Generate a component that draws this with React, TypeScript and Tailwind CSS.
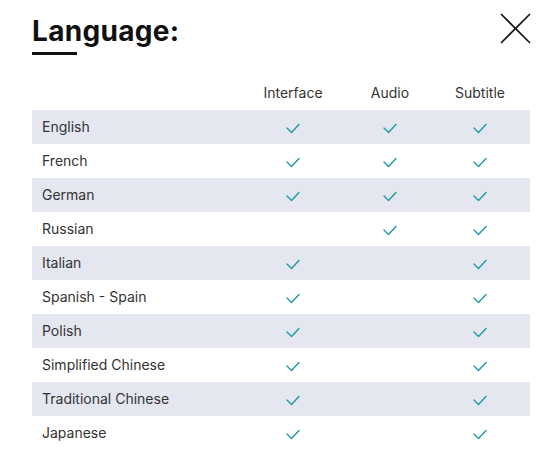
import * as React from 'react';

const languages = [
  { name: "English", interface: true, audio: true, subtitle: true },
  { name: "French", interface: true, audio: true, subtitle: true },
  { name: "German", interface: true, audio: true, subtitle: true },
  { name: "Russian", interface: false, audio: true, subtitle: true },
  { name: "Italian", interface: true, audio: false, subtitle: true },
  { name: "Spanish - Spain", interface: true, audio: false, subtitle: true },
  { name: "Polish", interface: true, audio: false, subtitle: true },
  { name: "Simplified Chinese", interface: true, audio: false, subtitle: true },
  { name: "Traditional Chinese", interface: true, audio: false, subtitle: true },
  { name: "Japanese", interface: true, audio: false, subtitle: true },
];

function Check() {
  return (
    <svg width="14" height="11" viewBox="0 0 14 11" fill="none">
      <path d="M1 5 L5.5 9.5 L13 1.5" stroke="#1e98a6" strokeWidth="1.4" strokeLinecap="round" strokeLinejoin="round" />
    </svg>
  );
}

function Cell({ on }: { on: boolean }) {
  return <div className="flex items-center justify-center pt-[2px]">{on ? <Check /> : null}</div>;
}

export default function App() {
  return (
    <div className="w-[556px] h-[467px] bg-white font-['Inter',sans-serif] text-[#333]">
      <div className="flex items-start justify-between pl-8 pr-[25px] pt-[13px]">
        <div>
          <h1 className="text-[28px] leading-[36px] font-bold text-[#111] tracking-[0.3px]">Language:</h1>
          <div className="mt-[3px] h-[3px] w-[45px] bg-[#111]" />
        </div>
        <svg width="31" height="31" viewBox="0 0 31 31">
          <path d="M1 1 L30 30 M30 1 L1 30" stroke="#111" strokeWidth="1.6" />
        </svg>
      </div>
      <div className="mx-8 mt-[23px] w-[498px]">
        <div className="grid grid-cols-[212px_98px_96px_84px] h-[32px] items-center pb-[4px] text-[14px]">
          <div />
          <div className="text-center">Interface</div>
          <div className="text-center">Audio</div>
          <div className="text-center">Subtitle</div>
        </div>
        {languages.map((l, i) => (
          <div
            key={l.name}
            className={
              "grid grid-cols-[212px_98px_96px_84px] h-[34px] items-center text-[14px] " +
              (i % 2 === 0 ? "bg-[#e4e7f0]" : "bg-white")
            }
          >
            <div className="pl-[10px] pb-[2px]">{l.name}</div>
            <Cell on={l.interface} />
            <Cell on={l.audio} />
            <Cell on={l.subtitle} />
          </div>
        ))}
      </div>
    </div>
  );
}
